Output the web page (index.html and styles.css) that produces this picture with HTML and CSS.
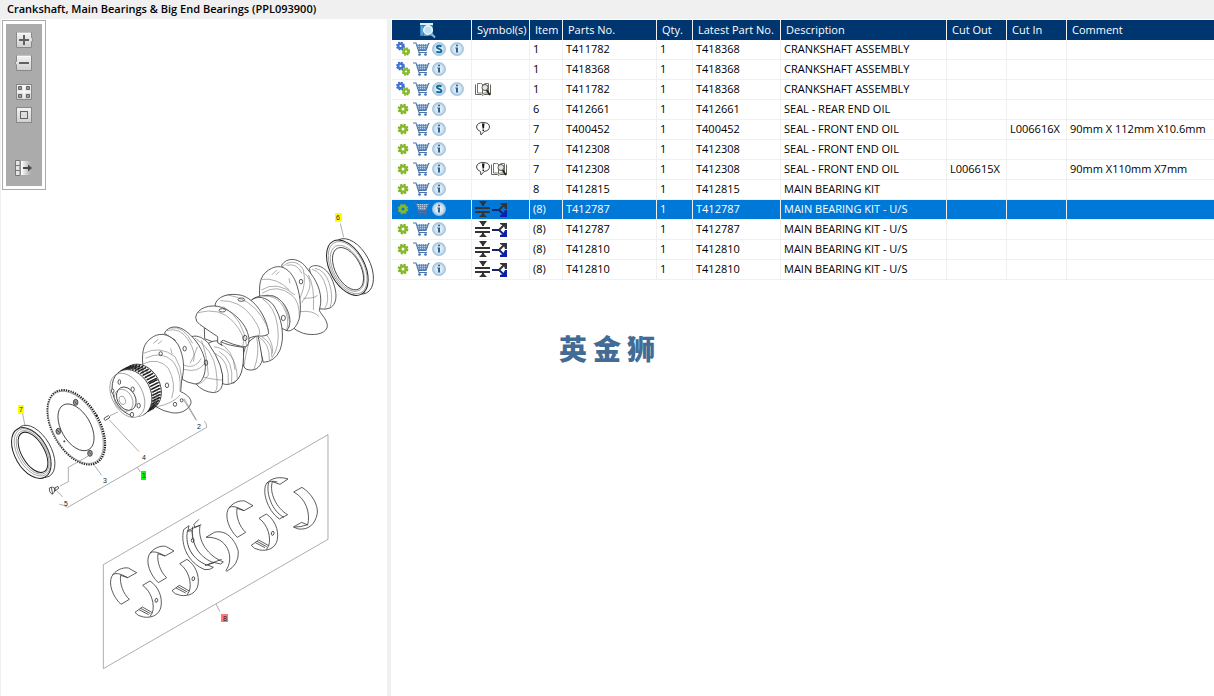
FILE: index.html
```html
<!DOCTYPE html>
<html lang="en">
<head>
<meta charset="utf-8">
<title>Crankshaft, Main Bearings &amp; Big End Bearings</title>
<link rel="stylesheet" href="styles.css">
</head>
<body>
<svg class="defs" aria-hidden="true">
  <defs>
    <linearGradient id="g-key" x1="0" y1="0" x2="0" y2="1"><stop offset="0" stop-color="#f4f4f4"/><stop offset="1" stop-color="#cfcfcf"/></linearGradient>
    <linearGradient id="g-fade"><stop offset="0" stop-color="#fff"/><stop offset="1" stop-color="#ababab"/></linearGradient>
    <radialGradient id="g-ball"><stop offset="0" stop-color="#eef5fa"/><stop offset=".6" stop-color="#d3e5f2"/><stop offset="1" stop-color="#9dc0dc"/></radialGradient>
    <symbol id="gear" viewBox="0 0 18 18">
      <circle cx="8" cy="9" r="4.300" fill="none" stroke="#7db023" stroke-width="2.200" stroke-dasharray="2 1.38"/>
      <circle cx="8" cy="9" r="2.900" fill="none" stroke="#86b92b" stroke-width="2.800"/>
    </symbol>
    <symbol id="gears" viewBox="0 0 18 18">
      <circle cx="5.500" cy="6" r="3.300" fill="none" stroke="#2d62c8" stroke-width="2.200" stroke-dasharray="1.6 .99"/>
      <circle cx="5.500" cy="6" r="2.300" fill="none" stroke="#3f74d8" stroke-width="2.400"/>
      <circle cx="11" cy="11.500" r="3.100" fill="none" stroke="#7db023" stroke-width="2.200" stroke-dasharray="1.5 .93"/>
      <circle cx="11" cy="11.500" r="2.200" fill="none" stroke="#86b92b" stroke-width="2.300"/>
    </symbol>
    <symbol id="cart" viewBox="0 0 18 18">
      <path d="M3.500 4H15.500L13 10H5.500Z" fill="#b9cfe7"/>
      <path d="M4 5.500H15M4.500 7.500H14.500M5 9.500H13.500M6.500 4V10M8.500 4V10M10.500 4V10M12.500 4V10" stroke="#5f86b6" stroke-width=".8" fill="none"/>
      <path d="M0 3H3L6 12.500H14M16.500 3.500H15.500L13 10.500H5.500" stroke="#4a76ad" stroke-width="1.100" fill="none"/>
      <circle cx="6.500" cy="14.500" r="1.300" fill="#3d6ca6"/><circle cx="12.500" cy="14.500" r="1.300" fill="#3d6ca6"/>
    </symbol>
    <symbol id="info" viewBox="0 0 18 18">
      <circle cx="8" cy="9" r="6.600" fill="url(#g-ball)" stroke="#a3c3dc" stroke-width=".7"/>
      <path d="M7 4.700H9V6.300H7ZM6.300 7.500H9V12.500H7V8.500H6.300Z" fill="#2b6198"/>
    </symbol>
    <symbol id="super" viewBox="0 0 18 18">
      <circle cx="8" cy="9" r="6.600" fill="url(#g-ball)" stroke="#a3c3dc" stroke-width=".7"/>
      <path d="M10.500 6.700C9.500 5.500 6 5.300 6 7.300C6 9.300 10.400 8.500 10.400 10.800C10.400 13 6.500 12.500 5.500 11.300" stroke="#116a9c" stroke-width="2" fill="none"/>
    </symbol>
    <symbol id="book" viewBox="0 0 16 16">
      <path d="M2.500 2.500H5.500Q7 2.500 8 4Q9 2.500 11 2.500H13.500V12H9.500L8 13L6.500 12H2.500Z" fill="#fff" stroke="#77776c"/>
      <path d="M.5 3.500V13.500H6.500L8 14.500L9 13.500H15.500V3.500M7.500 4V12.500" stroke="#66665c" fill="none"/>
      <circle cx="10" cy="6.500" r="3" fill="#e6e6e6" stroke="#555"/><path d="M11.500 9L15 14" stroke="#222" stroke-width="1.800"/>
    </symbol>
    <symbol id="note" viewBox="0 0 16 16">
      <path d="M5.500 10.500Q1.500 9 1.500 6Q2 1.500 8 1.500Q14.500 1.500 14.500 6Q14 10 9 10.500L6 14Z" fill="#fff" stroke="#444"/>
      <path d="M7 2.500H9.500L9 7.500H7.500ZM7.500 8.500H9V10H7.500Z" fill="#111"/>
    </symbol>
    <symbol id="size" viewBox="0 0 16 16">
      <path d="M4 0H12L9 4V5H7V4ZM0 6H15V8H0ZM0 10H15V12H0ZM7 12H9V13L12 16H4L7 13Z" fill="#333"/>
    </symbol>
    <symbol id="branch" viewBox="0 0 16 16">
      <path d="M1 9H9" stroke="#16246c" stroke-width="2"/><path d="M8.500 8.500L13 4" stroke="#333" stroke-width="2"/><path d="M9 2H16V8H14L13 5L9 3Z" fill="#333"/>
      <path d="M8.500 9.500L13 13.500" stroke="#16246c" stroke-width="2"/><path d="M16 9V16H9V14L12 13L14 9Z" fill="#0b1fae"/>
    </symbol>
    <symbol id="find" viewBox="0 0 18 18">
      <path d="M1 2H14V15H1Z" fill="#2e83bf"/><path d="M1 2H14V4H1Z" fill="#d9edf8"/><path d="M3 5V14M5 14H9" stroke="#8cc4e6"/>
      <circle cx="9" cy="9" r="4.300" fill="#bfe0f1" stroke="#eef7fc" stroke-width="1.500"/><path d="M12 12.500L16 16.500" stroke="#8cb5d4" stroke-width="2.200"/>
    </symbol>
    <g id="shell-a"><path class="fill" d="M63 523C38 500 25 462 35 440C45 421 68 411 85 414L110 428L83 443L62 436C58 460 70 492 88 508Z"/><path d="M38 434Q50 424 83 443"/></g>
    <g id="shell-b"><path class="fill" d="M128 466L150 453C175 470 188 500 183 530C178 555 155 565 130 561Q112 558 105 547L127 531L157 548C165 525 155 485 128 466Z"/><path d="M117 539L146 554M122 535L151 551M157 548L150 560"/><ellipse cx="169" cy="511" rx="4" ry="6" transform="rotate(15 169 511)"/></g>
  </defs>
</svg>

<header class="titlebar"><h1 class="title">Crankshaft, Main Bearings &amp; Big End Bearings (PPL093900)</h1></header>

<main class="workspace">
  <section class="drawing" aria-label="Parts drawing">
    <svg class="sheet" viewBox="1 19 386 677" role="img" aria-label="Exploded view of the crankshaft and bearings">
      <g class="ink" transform="translate(100 240) scale(.33333)">
        <!-- rear seal -->
        <ellipse class="fill" cx="758" cy="79" rx="52" ry="90" transform="rotate(-28 758 79)"/>
        <ellipse class="fill heavy" cx="742" cy="83" rx="52" ry="90" transform="rotate(-28 742 83)"/>
        <ellipse class="thin" cx="743" cy="83" rx="48" ry="85" transform="rotate(-28 743 83)"/>
        <ellipse class="thin" cx="742" cy="85" rx="42" ry="75" transform="rotate(-28 742 85)"/>
        <ellipse cx="744" cy="86" rx="38" ry="69" transform="rotate(-28 744 86)"/>
        <path class="thin" d="M721-50L731-8"/>
        <!-- rear journal and webs -->
        <path class="fill" d="M628 85C640 70 672 74 692 110C712 150 715 190 690 204Q678 210 655 206Z"/>
        <path class="thin" d="M645 85Q675 90 688 130T690 203M636 88Q666 96 678 140T674 206"/>
        <path class="fill" d="M545 76C560 50 600 52 622 87C650 120 665 155 662 190L658 212C665 225 687 245 681 264C672 283 640 288 610 280Q588 272 577 262L570 150Z"/>
        <path class="thin" d="M548 80C570 58 598 65 610 90Q620 130 600 175M614 100Q650 130 605 188M610 175Q650 175 652 165M600 215Q640 210 657 230M625 105Q645 140 640 210M560 76Q590 68 606 100"/>
        <ellipse cx="603" cy="125" rx="5" ry="7"/>
        <path class="fill" d="M479 170C476 120 485 100 515 85C545 70 572 90 587 125C600 160 605 200 598 235C590 262 575 276 560 272L535 250L478 190Z"/>
        <path class="thin" d="M485 118Q530 112 568 150M486 160Q530 130 575 165Q600 185 598 235M484 150Q530 120 585 165M515 105L530 90M528 104L538 95M567 115L570 130"/>
        <path class="fill" d="M452 183C466 166 495 165 520 168C550 178 570 215 570 245Q568 262 561 272L545 265L500 220Z"/>
        <path class="thin" d="M490 168Q530 165 550 200T560 270M498 165Q542 165 557 205T568 262"/>
        <ellipse cx="550" cy="234" rx="6" ry="8"/>
        <path class="fill" d="M452 183C470 165 500 170 520 195C545 230 556 290 540 330Q525 365 490 367L470 290Z"/>
        <path class="thin" d="M488 177Q525 200 533 260T515 355M475 290Q510 310 508 360M485 290Q520 310 515 350M500 285Q520 310 518 340"/>
        <!-- centre webs -->
        <path class="fill" d="M440 310C425 350 424 382 440 388C462 395 480 385 487 360Q480 310 473 285Z"/>
        <path class="thin" d="M448 302Q435 350 432 380M470 290Q480 340 462 388"/>
        <path class="fill" d="M345 195C350 170 385 157 425 166C465 178 500 230 506 280Q500 290 473 288Q450 290 440 300Z"/>
        <path class="thin" d="M361 182Q420 180 456 230T473 288M380 164Q450 175 485 230T498 285"/>
        <ellipse cx="424" cy="179" rx="10" ry="5"/>
        <path class="fill" d="M313 265L314 296L350 310Q395 340 400 430Q430 410 430 330L440 270Z"/>
        <path class="fill" d="M275 290C310 278 350 330 364 380C374 430 368 456 340 458Q308 455 288 432Z"/>
        <path class="fill" d="M325 310Q345 298 363 305Q380 316 430 322C432 360 430 410 405 425Q385 438 368 431Q374 380 325 310Z"/>
        <path class="thin" d="M345 340Q390 360 385 433M358 335Q402 360 395 430M342 320Q410 330 412 418M353 308Q400 325 405 390"/>
        <path class="fill" d="M287 232C290 205 330 190 365 202C410 220 445 260 447 300Q446 324 428 320Q400 315 370 301Q358 303 366 316L353 308V290Q330 275 300 254Q287 245 287 232Z"/>
        <path class="thin" d="M293 218Q360 200 400 245T428 320M370 200Q430 235 440 318"/>
        <ellipse cx="367" cy="211" rx="10" ry="5"/><ellipse cx="435" cy="294" rx="6" ry="8"/>
        <path class="thin" d="M285 294Q340 330 348 390T345 455M304 301Q320 340 325 405Q310 430 290 433M312 412Q350 420 365 420"/>
        <!-- front webs -->
        <path class="fill" d="M193 280C205 256 235 255 260 275C285 295 312 330 316 370C318 405 305 432 285 432Q262 428 247 418L225 300Z"/>
        <path class="thin" d="M200 272Q240 260 265 300T280 365M210 264Q250 255 278 310M250 375Q285 390 304 355M252 388Q295 400 313 370M270 370Q285 345 292 320"/>
        <ellipse cx="254" cy="326" rx="5" ry="7"/><ellipse cx="318" cy="368" rx="5" ry="8"/>
        <path class="fill" d="M128 372C126 330 130 308 160 290C185 275 215 285 235 315C252 350 255 385 245 420L242 455C265 465 277 480 272 492C262 515 235 522 215 518Q188 514 168 500Z"/>
        <path class="thin" d="M131 340Q180 315 225 350Q244 380 245 415M136 355Q185 330 220 365Q245 400 240 455M128 372Q175 350 205 385Q230 430 215 475M172 500Q220 490 240 465M160 310L175 298M174 312L186 302M212 325L216 342"/>
        <ellipse cx="182" cy="341" rx="5" ry="6"/><ellipse cx="201" cy="436" rx="5" ry="7"/><ellipse cx="225" cy="493" rx="5" ry="6"/><ellipse cx="245" cy="481" rx="4" ry="5"/>
        <path class="thin" d="M250 478L288 540"/>
        <!-- timing gear -->
        <ellipse class="fill" cx="124" cy="442" rx="56" ry="73" transform="rotate(-28 124 442)"/>
        <g class="teeth">
          <ellipse class="fill" cx="121" cy="444" rx="54" ry="71" transform="rotate(-28 121 444)"/>
          <ellipse cx="117" cy="446" rx="54" ry="71" transform="rotate(-28 117 446)"/>
          <ellipse cx="113" cy="448" rx="54" ry="71" transform="rotate(-28 113 448)"/>
          <ellipse cx="109" cy="450" rx="54" ry="71" transform="rotate(-28 109 450)"/>
          <ellipse cx="105" cy="452" rx="54" ry="71" transform="rotate(-28 105 452)"/>
          <ellipse cx="101" cy="454" rx="54" ry="71" transform="rotate(-28 101 454)"/>
        </g>
        <ellipse class="fill" cx="96" cy="459" rx="55" ry="74" transform="rotate(-28 96 459)"/>
        <path class="fill" stroke="none" d="M52 402L70 392L130 525L100 535Z"/>
        <ellipse class="thin" cx="82" cy="466" rx="46" ry="71" transform="rotate(-28 82 466)"/>
        <ellipse class="fill" cx="79" cy="476" rx="27" ry="37" transform="rotate(-28 79 476)"/>
        <ellipse class="thin" cx="71" cy="481" rx="26" ry="35" transform="rotate(-28 71 481)"/>
        <ellipse class="thin" cx="67" cy="481" rx="9" ry="13" transform="rotate(-20 67 481)"/>
        <g class="fill"><ellipse cx="58" cy="426" rx="4" ry="7"/><ellipse cx="98" cy="448" rx="5" ry="7"/><ellipse cx="116" cy="497" rx="5" ry="7"/><ellipse cx="96" cy="524" rx="5" ry="7"/><ellipse cx="38" cy="453" rx="4" ry="6"/></g>
      </g>

      <g class="ink" transform="translate(0 370) scale(.33333)">
        <!-- front seal -->
        <ellipse class="fill" cx="105" cy="244" rx="48" ry="86" transform="rotate(-30 105 244)"/>
        <ellipse class="fill heavy" cx="94" cy="249" rx="49" ry="83" transform="rotate(-30 94 249)"/>
        <ellipse class="thin" cx="97" cy="247" rx="44" ry="78" transform="rotate(-30 97 247)"/>
        <ellipse class="thin" cx="98" cy="247" rx="39" ry="72" transform="rotate(-30 98 247)"/>
        <ellipse class="heavy" cx="99" cy="247" rx="34" ry="67" transform="rotate(-30 99 247)"/>
        <!-- timing ring -->
        <ellipse class="ring-teeth" cx="229" cy="172" rx="70" ry="122" transform="rotate(-30 229 172)"/>
        <ellipse class="fill thin" cx="227" cy="172" rx="67" ry="119" transform="rotate(-30 227 172)"/>
        <ellipse cx="228" cy="172" rx="44" ry="77" transform="rotate(-30 228 172)"/>
        <g class="bolt"><ellipse cx="227" cy="97" rx="7" ry="9"/><ellipse cx="175" cy="184" rx="7" ry="9"/><ellipse cx="270" cy="250" rx="7" ry="9"/><circle cx="193" cy="214" r="2"/></g>
        <path d="M224 95l6 6M172 181l6 6M267 247l6 6"/>
        <!-- dowel and screw -->
        <path class="fill" d="M313 144L325 137Q331 139 328 144L316 151Q310 149 313 144Z"/>
        <path class="fill" d="M148 354Q156 347 166 356Q166 368 156 373Q146 366 148 354ZM164 354L174 349L176 355L164 363Z"/>
        <path d="M154 352L158 372"/>
        <g class="thin"><path d="M330 137L354 126M328 150L417 245M265 258L205 292V335L180 348M170 362L188 381M283 286L305 316M68 132L75 167M412 292L421 306M552 85L590 151"/><path d="M178 403Q190 404 203 412L620 172Q620 160 613 153"/></g>
      </g>

      <g class="ink" transform="translate(100 430) scale(.33333)">
        <path class="thin" d="M10 404L684 14V328L10 716ZM348 522L360 545"/>
        <use href="#shell-a"/><use href="#shell-a" x="112" y="-65"/><use href="#shell-a" x="349" y="-201"/>
        <use href="#shell-b"/><use href="#shell-b" x="111" y="-65"/><use href="#shell-b" x="349" y="-201"/>
        <!-- thrust washers -->
        <path class="fill" d="M267 287L251 299C240 345 265 400 315 419Q332 420 340 412L323 405C275 385 252 350 267 287Z"/>
        <path class="fill" d="M262 304L276 302C277 345 300 385 345 397L320 405C278 388 255 350 262 304Z"/>
        <path class="fill" d="M297 268L282 283L284 292L300 286C292 335 325 378 370 396L362 402L335 396C300 380 272 345 278 290"/>
        <path d="M262 302L304 284M315 407L365 388"/>
        <ellipse cx="278" cy="331" rx="4" ry="6"/>
        <path class="fill" d="M318 322L343 307C375 298 405 325 415 365Q417 405 380 424L378 421C404 385 385 318 318 322Z"/>
        <!-- rear shells -->
        <path class="fill" d="M538 267C500 240 485 180 500 160C515 143 540 139 564 147L540 163L517 155C507 190 530 235 563 254Z"/><path d="M506 158C497 190 517 245 552 262M500 160Q512 150 532 156"/>
        <path class="fill" d="M581 186L606 172C635 190 655 225 652 250C645 285 625 300 595 297L580 291L605 277L623 285C632 250 618 205 581 186Z"/><path d="M585 291Q600 292 623 284"/>
      </g>

      <rect class="tag tag-yellow" x="335" y="213" width="7" height="9"/>
      <rect class="tag tag-yellow" x="18" y="405" width="6" height="9"/>
      <rect class="tag tag-green" x="141" y="471" width="5" height="9"/>
      <rect class="tag tag-red" x="221" y="614" width="7" height="8"/>
      <g class="callouts">
        <text x="338" y="220">6</text><text x="21" y="412">7</text><text x="144" y="478">1</text><text x="225" y="621">8</text>
        <text x="199" y="429">2</text><text x="105" y="483">3</text><text x="144" y="460">4</text><text x="66" y="506">5</text>
      </g>
    </svg>

    <div class="tools" role="toolbar" aria-label="Drawing tools">
      <button class="tool" type="button" aria-label="Zoom in"><svg viewBox="0 0 18 18"><path d="M1.500 1.500H16.500V6L18 9L16.500 11V16.500H1.500Z" fill="url(#g-key)" stroke="#888"/><path d="M2 2H16" stroke="#fff"/><path d="M4 9H14M9 4V14" stroke="#606060" stroke-width="2"/></svg></button>
      <button class="tool" type="button" aria-label="Zoom out"><svg viewBox="0 0 18 18"><path d="M1.500 1.500H16.500V16.500H1.500V11L0 9L1.500 7Z" fill="url(#g-key)" stroke="#888"/><path d="M2 2H16" stroke="#fff"/><path d="M4 9H14" stroke="#606060" stroke-width="2"/></svg></button>
      <button class="tool tool-gap" type="button" aria-label="Fit sheet"><svg viewBox="0 0 18 18"><rect x="1.500" y="1.500" width="15" height="15" fill="url(#g-key)" stroke="#888"/><path d="M3.500 3.500H6.500V6.500H3.500ZM11.500 3.500H14.500V6.500H11.500ZM3.500 11.500H6.500V14.500H3.500ZM11.500 11.500H14.500V14.500H11.500Z" fill="#999" stroke="#666"/><path d="M9 2V16M2 9H16" stroke="#fff"/></svg></button>
      <button class="tool" type="button" aria-label="Actual size"><svg viewBox="0 0 18 18"><rect x="1.500" y="1.500" width="15" height="15" fill="url(#g-key)" stroke="#888"/><rect x="5.500" y="5.500" width="7" height="7" fill="#ddd" stroke="#606060"/></svg></button>
      <button class="tool tool-last" type="button" aria-label="Undock drawing"><svg viewBox="0 0 18 18"><path d="M.5 1.500H5V16.500H.5ZM.5 6.500H5M.5 11.500H5" fill="#e4e4e4" stroke="#777"/><path d="M6 2H16V16H6Z" fill="url(#g-fade)"/><path d="M8 9H14" stroke="#4a4a4a" stroke-width="2"/><path d="M13 5.500L17 9L13 12.500Z" fill="#4a4a4a"/></svg></button>
    </div>
  </section>

  <section class="parts" aria-label="Parts list">
    <table class="grid">
      <colgroup><col class="c-act"><col class="c-sym"><col class="c-item"><col class="c-part"><col class="c-qty"><col class="c-latest"><col class="c-desc"><col class="c-cut"><col class="c-cut"><col></colgroup>
      <thead><tr><th class="find"><button class="act" type="button" aria-label="Find"><svg><use href="#find"/></svg></button></th><th>Symbol(s)</th><th>Item</th><th>Parts No.</th><th>Qty.</th><th>Latest Part No.</th><th>Description</th><th>Cut Out</th><th>Cut In</th><th>Comment</th></tr></thead>
      <tbody>
        <tr><td><div class="acts"><button class="act" type="button" aria-label="Assembly"><svg><use href="#gears"/></svg></button><button class="act" type="button" aria-label="Add to cart"><svg><use href="#cart"/></svg></button><button class="act" type="button" aria-label="Supersession"><svg><use href="#super"/></svg></button><button class="act" type="button" aria-label="Information"><svg><use href="#info"/></svg></button></div></td><td></td><td>1</td><td>T411782</td><td>1</td><td>T418368</td><td>CRANKSHAFT ASSEMBLY</td><td></td><td></td><td></td></tr>
        <tr><td><div class="acts"><button class="act" type="button" aria-label="Assembly"><svg><use href="#gears"/></svg></button><button class="act" type="button" aria-label="Add to cart"><svg><use href="#cart"/></svg></button><button class="act" type="button" aria-label="Information"><svg><use href="#info"/></svg></button></div></td><td></td><td>1</td><td>T418368</td><td>1</td><td>T418368</td><td>CRANKSHAFT ASSEMBLY</td><td></td><td></td><td></td></tr>
        <tr><td><div class="acts"><button class="act" type="button" aria-label="Assembly"><svg><use href="#gears"/></svg></button><button class="act" type="button" aria-label="Add to cart"><svg><use href="#cart"/></svg></button><button class="act" type="button" aria-label="Supersession"><svg><use href="#super"/></svg></button><button class="act" type="button" aria-label="Information"><svg><use href="#info"/></svg></button></div></td><td><div class="syms"><svg><use href="#book"/></svg></div></td><td>1</td><td>T411782</td><td>1</td><td>T418368</td><td>CRANKSHAFT ASSEMBLY</td><td></td><td></td><td></td></tr>
        <tr><td><div class="acts"><button class="act" type="button" aria-label="Part"><svg><use href="#gear"/></svg></button><button class="act" type="button" aria-label="Add to cart"><svg><use href="#cart"/></svg></button><button class="act" type="button" aria-label="Information"><svg><use href="#info"/></svg></button></div></td><td></td><td>6</td><td>T412661</td><td>1</td><td>T412661</td><td>SEAL - REAR END OIL</td><td></td><td></td><td></td></tr>
        <tr><td><div class="acts"><button class="act" type="button" aria-label="Part"><svg><use href="#gear"/></svg></button><button class="act" type="button" aria-label="Add to cart"><svg><use href="#cart"/></svg></button><button class="act" type="button" aria-label="Information"><svg><use href="#info"/></svg></button></div></td><td><div class="syms"><svg><use href="#note"/></svg></div></td><td>7</td><td>T400452</td><td>1</td><td>T400452</td><td>SEAL - FRONT END OIL</td><td></td><td>L006616X</td><td>90mm X 112mm X10.6mm</td></tr>
        <tr><td><div class="acts"><button class="act" type="button" aria-label="Part"><svg><use href="#gear"/></svg></button><button class="act" type="button" aria-label="Add to cart"><svg><use href="#cart"/></svg></button><button class="act" type="button" aria-label="Information"><svg><use href="#info"/></svg></button></div></td><td></td><td>7</td><td>T412308</td><td>1</td><td>T412308</td><td>SEAL - FRONT END OIL</td><td></td><td></td><td></td></tr>
        <tr><td><div class="acts"><button class="act" type="button" aria-label="Part"><svg><use href="#gear"/></svg></button><button class="act" type="button" aria-label="Add to cart"><svg><use href="#cart"/></svg></button><button class="act" type="button" aria-label="Information"><svg><use href="#info"/></svg></button></div></td><td><div class="syms"><svg><use href="#note"/></svg><svg><use href="#book"/></svg></div></td><td>7</td><td>T412308</td><td>1</td><td>T412308</td><td>SEAL - FRONT END OIL</td><td>L006615X</td><td></td><td>90mm X110mm X7mm</td></tr>
        <tr><td><div class="acts"><button class="act" type="button" aria-label="Part"><svg><use href="#gear"/></svg></button><button class="act" type="button" aria-label="Add to cart"><svg><use href="#cart"/></svg></button><button class="act" type="button" aria-label="Information"><svg><use href="#info"/></svg></button></div></td><td></td><td>8</td><td>T412815</td><td>1</td><td>T412815</td><td>MAIN BEARING KIT</td><td></td><td></td><td></td></tr>
        <tr class="selected" aria-selected="true"><td><div class="acts"><button class="act" type="button" aria-label="Part"><svg><use href="#gear"/></svg></button><button class="act" type="button" aria-label="Add to cart"><svg><use href="#cart"/></svg></button><button class="act" type="button" aria-label="Information"><svg><use href="#info"/></svg></button></div></td><td><div class="syms"><svg><use href="#size"/></svg><svg><use href="#branch"/></svg></div></td><td>(8)</td><td>T412787</td><td>1</td><td>T412787</td><td>MAIN BEARING KIT - U/S</td><td></td><td></td><td></td></tr>
        <tr><td><div class="acts"><button class="act" type="button" aria-label="Part"><svg><use href="#gear"/></svg></button><button class="act" type="button" aria-label="Add to cart"><svg><use href="#cart"/></svg></button><button class="act" type="button" aria-label="Information"><svg><use href="#info"/></svg></button></div></td><td><div class="syms"><svg><use href="#size"/></svg><svg><use href="#branch"/></svg></div></td><td>(8)</td><td>T412787</td><td>1</td><td>T412787</td><td>MAIN BEARING KIT - U/S</td><td></td><td></td><td></td></tr>
        <tr><td><div class="acts"><button class="act" type="button" aria-label="Part"><svg><use href="#gear"/></svg></button><button class="act" type="button" aria-label="Add to cart"><svg><use href="#cart"/></svg></button><button class="act" type="button" aria-label="Information"><svg><use href="#info"/></svg></button></div></td><td><div class="syms"><svg><use href="#size"/></svg><svg><use href="#branch"/></svg></div></td><td>(8)</td><td>T412810</td><td>1</td><td>T412810</td><td>MAIN BEARING KIT - U/S</td><td></td><td></td><td></td></tr>
        <tr><td><div class="acts"><button class="act" type="button" aria-label="Part"><svg><use href="#gear"/></svg></button><button class="act" type="button" aria-label="Add to cart"><svg><use href="#cart"/></svg></button><button class="act" type="button" aria-label="Information"><svg><use href="#info"/></svg></button></div></td><td><div class="syms"><svg><use href="#size"/></svg><svg><use href="#branch"/></svg></div></td><td>(8)</td><td>T412810</td><td>1</td><td>T412810</td><td>MAIN BEARING KIT - U/S</td><td></td><td></td><td></td></tr>
      </tbody>
    </table>
  </section>
</main>

<div class="watermark" lang="zh"><span>英</span><span>金</span><span>狮</span></div>
</body>
</html>
```
FILE: styles.css
```css
* { box-sizing: border-box; }

body {
  margin: 0;
  min-height: 100vh;
  display: flex;
  flex-direction: column;
  background: #fff;
  color: #000;
  font: 11px/18px "Open Sans", "Noto Sans", sans-serif;
}

.defs { position: absolute; width: 0; height: 0; }

.titlebar { background: #f0f0f0; padding: 0 7px 1px; }
.title { margin: 0; font-size: 11px; line-height: 18px; font-weight: 600; }

.workspace {
  flex: 1;
  display: grid;
  grid-template-columns: 387fr 827fr;
}

/* drawing pane */
.drawing { position: relative; border-left: 1px solid #f0f0f0; }
.sheet { display: block; width: 100%; height: auto; }
.ink { fill: none; stroke: #333; stroke-width: 2.4; stroke-linejoin: round; }
.ink .fill { fill: #fff; }
.ink .thin { stroke: #777; stroke-width: 1.8; }
.ink .heavy { stroke: #222; stroke-width: 3; }
.teeth ellipse { stroke: #222; stroke-width: 7; stroke-dasharray: 4 5; }
.ring-teeth { stroke: #222; stroke-width: 7; stroke-dasharray: 4 3; }
.bolt { fill: #999; }
.callouts { font: 7px "Liberation Sans", sans-serif; fill: #222; text-anchor: middle; }
.tag-yellow { fill: #ff0; }
.tag-green { fill: #0f0; }
.tag-red { fill: #f77; }

.tools {
  position: absolute;
  top: 1px;
  left: 1px;
  width: 44px;
  display: flex;
  flex-direction: column;
  align-items: center;
  gap: 5px;
  padding: 10px 3px 12px;
  border: 1px solid #ababab;
  background: #ababab;
  box-shadow: inset 0 0 0 3px #fff;
}
.tool, .act { display: block; padding: 0; border: 0; background: none; width: 18px; height: 18px; }
.tool svg, .act svg { display: block; width: 18px; height: 18px; }
.tool-gap { margin-top: 6px; }
.tool-last { margin-top: 30px; }

/* parts list */
.parts { border-left: 4px solid #f0f0f0; border-top: 1px solid #fff; padding-left: 1px; min-width: 0; }
.grid { width: 100%; table-layout: fixed; border-collapse: separate; border-spacing: 0; }
.c-act { width: 80px; }
.c-sym { width: 58px; }
.c-item { width: 33px; }
.c-part { width: 94px; }
.c-qty { width: 36px; }
.c-latest { width: 88px; }
.c-desc { width: 166px; }
.c-cut { width: 60px; }

th, td { height: 20px; padding: 0 3px; text-align: left; white-space: nowrap; border-right: 1px solid #f0f0f0; }
th { padding: 0 0 0 5px; background: #003670; color: #fff; font-weight: 400; }
td { vertical-align: top; border-bottom: 1px solid #f0f0f0; }
th:last-child, td:last-child { border-right: 0; }
.find { padding: 0 8px 0 0; }
.find .act { margin: 0 auto; }
.selected td { background: #0078d7; color: #fff; }
.acts, .syms { display: flex; height: 18px; align-items: center; }
.syms svg { width: 16px; height: 16px; }

.watermark {
  position: absolute;
  top: 50%;
  left: 50%;
  transform: translate(-50%, -50%);
  display: flex;
  gap: 6px;
  color: #426b95;
  font: 900 28px/28px "Noto Sans CJK SC", sans-serif;
}
```
